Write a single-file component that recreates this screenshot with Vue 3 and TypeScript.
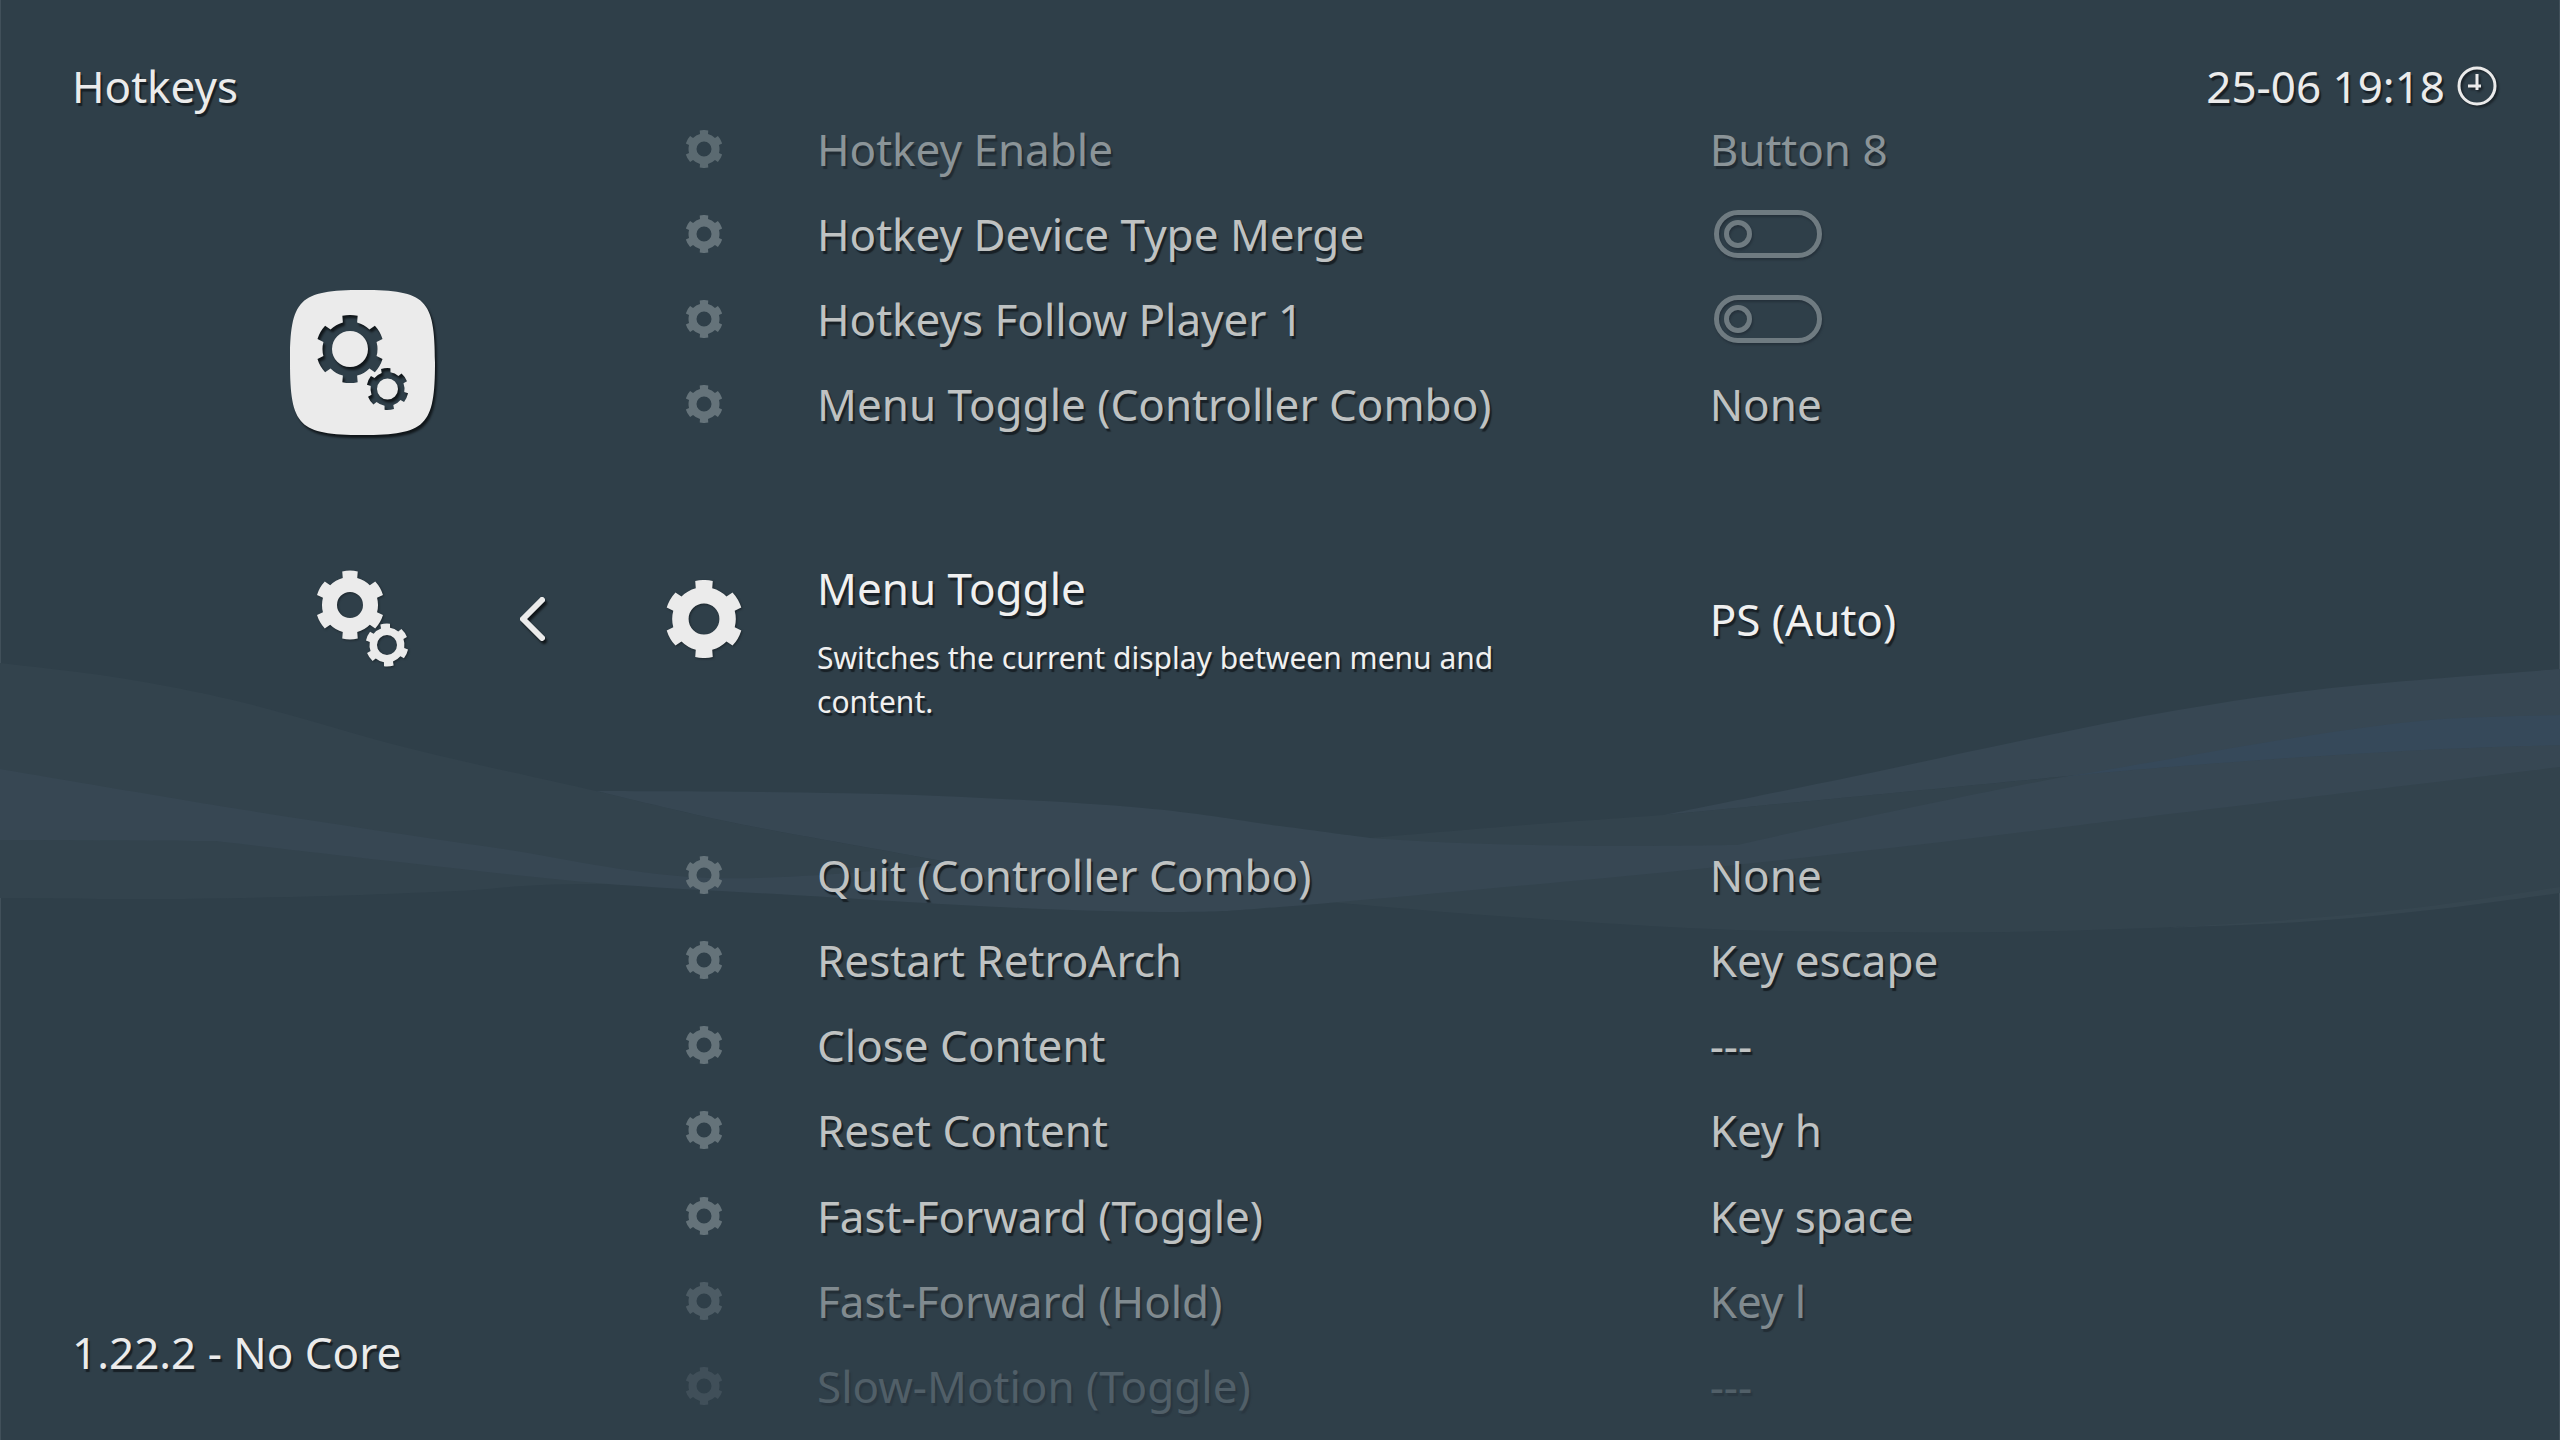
<script setup lang="ts">
type Point = [number, number]

interface Entry {
  label: string
  value?: string
  toggle?: boolean
  fade?: 'soft' | 'dim' | 'faint'
}

const before: Entry[] = [
  { label: 'Hotkey Enable', value: 'Button 8', fade: 'soft' },
  { label: 'Hotkey Device Type Merge', toggle: true },
  { label: 'Hotkeys Follow Player 1', toggle: true },
  { label: 'Menu Toggle (Controller Combo)', value: 'None' },
]

const after: Entry[] = [
  { label: 'Quit (Controller Combo)', value: 'None' },
  { label: 'Restart RetroArch', value: 'Key escape' },
  { label: 'Close Content', value: '---' },
  { label: 'Reset Content', value: 'Key h' },
  { label: 'Fast-Forward (Toggle)', value: 'Key space' },
  { label: 'Fast-Forward (Hold)', value: 'Key l', fade: 'dim' },
  { label: 'Slow-Motion (Toggle)', value: '---', fade: 'faint' },
]

// Six-toothed gear: outer radius, body radius, hole radius, rotation in degrees.
function gear(cx: number, cy: number, outer: number, body: number, hole: number, turn = 0): string {
  const at = (r: number, deg: number) => {
    const a = ((deg + turn - 90) * Math.PI) / 180
    return `${(cx + r * Math.cos(a)).toFixed(2)} ${(cy + r * Math.sin(a)).toFixed(2)}`
  }
  let d = ''
  for (let i = 0; i < 6; i++) {
    const m = i * 60
    d += `${i ? 'L' : 'M'}${at(body, m - 15)}L${at(outer, m - 13)}`
    d += `A${outer} ${outer} 0 0 1 ${at(outer, m + 13)}L${at(body, m + 15)}`
    d += `A${body} ${body} 0 0 1 ${at(body, m + 45)}`
  }
  d += `ZM${cx - hole} ${cy}a${hole} ${hole} 0 1 0 ${hole * 2} 0a${hole} ${hole} 0 1 0 ${-hole * 2} 0Z`
  return d
}

// Smooth curve through a run of points.
function curve(p: Point[]): string {
  let d = `L${p[0][0]} ${p[0][1]}`
  for (let i = 0; i < p.length - 1; i++) {
    const a = p[i - 1] ?? p[i]
    const b = p[i]
    const c = p[i + 1]
    const e = p[i + 2] ?? c
    d += `C${b[0] + (c[0] - a[0]) / 6} ${b[1] + (c[1] - a[1]) / 6} ${c[0] - (e[0] - b[0]) / 6} ${c[1] - (e[1] - b[1]) / 6} ${c[0]} ${c[1]}`
  }
  return d
}

function shape(...runs: Point[][]): string {
  return `M${runs[0][0][0]} ${runs[0][0][1]}` + runs.map(curve).join('') + 'Z'
}

const crest: Point[] = [[0, 663], [120, 678], [245, 703], [408, 748], [596, 791], [735, 823], [898, 853], [960, 864]]
const rim: Point[] = [[1664, 815], [1851, 797], [2047, 778], [2110, 772], [2260, 760], [2423, 750], [2560, 745]]

const haze = [
  shape(crest, [[960, 890], [596, 884], [457, 891], [327, 896], [160, 899], [0, 898]]),
  shape(
    [[1370, 838], [1525, 825], [1664, 815]],
    rim,
    [[2560, 890], [2430, 908], [2300, 921], [2056, 931], [1851, 932], [1688, 928], [1484, 915], [1329, 902]],
  ),
]

const bands = [
  shape(
    [[0, 769], [245, 810], [490, 847], [710, 878], [960, 864]],
    [[960, 864], [898, 853], [735, 823], [596, 791]],
    [[596, 791], [759, 792], [939, 796], [1143, 808], [1280, 826], [1370, 838]],
    [[1370, 838], [1460, 843], [1600, 846], [1737, 845]],
    [[1737, 845], [1851, 820], [2047, 780], [2170, 759], [2300, 737], [2430, 720], [2560, 715]],
    [[2560, 767], [2178, 813], [1933, 843], [1688, 870], [1484, 889], [1280, 907], [1184, 912], [1020, 908], [792, 895], [596, 883], [408, 863], [216, 841]],
    [[216, 841], [0, 840]],
  ),
  shape(
    [[1664, 815], [1851, 777], [2015, 742], [2178, 710], [2341, 687], [2560, 669]],
    [...rim].reverse(),
  ),
]

const overlap = shape(
  [[2060, 778], [2170, 759], [2300, 737], [2430, 720], [2560, 715]],
  [[2560, 745], [2423, 750], [2260, 760], [2110, 772], [2060, 778]],
)

const glint = shape(
  [[2160, 928], [2300, 919], [2430, 906], [2560, 887]],
  [[2560, 893], [2430, 910], [2300, 922], [2160, 928]],
)
</script>

<template>
  <div class="screen">
    <svg class="ribbon" viewBox="0 0 2560 1440" preserveAspectRatio="none" aria-hidden="true">
      <path v-for="(d, i) in haze" :key="'h' + i" :d="d" fill="#33434d" />
      <path v-for="(d, i) in bands" :key="'b' + i" :d="d" fill="#374753" />
      <path :d="overlap" fill="#36495a" />
      <path :d="glint" fill="#364650" />
    </svg>

    <header class="top">
      <h1>Hotkeys</h1>
      <div class="clock">
        <time>25-06 19:18</time>
        <svg class="dial" viewBox="0 0 40 40" aria-hidden="true">
          <circle cx="20" cy="20" r="18" fill="none" stroke="currentColor" stroke-width="3" />
          <path d="M20 8V24M11 20H24" fill="none" stroke="currentColor" stroke-width="3" />
        </svg>
      </div>
    </header>

    <aside class="side">
      <svg class="tile" viewBox="0 0 145 145" aria-hidden="true">
        <path
          fill="currentColor"
          fill-rule="evenodd"
          :d="'M72.5 0C136 0 145 9 145 72.5S136 145 72.5 145S0 136 0 72.5S9 0 72.5 0Z' + gear(60, 59, 34, 27.5, 18) + gear(97.5, 99, 21, 17, 10.5, -5)"
        />
      </svg>
      <div class="category">
        <svg class="gears" viewBox="0 0 145 145" aria-hidden="true">
          <path fill="currentColor" fill-rule="evenodd" :d="gear(60, 59, 34.5, 28, 13)" />
          <path fill="currentColor" fill-rule="evenodd" :d="gear(97, 99, 21.5, 17.5, 10, -5)" />
        </svg>
        <button class="back" type="button" aria-label="Back">
          <svg viewBox="0 0 48 48" aria-hidden="true">
            <path d="M35 5L16 24L35 43" fill="none" stroke="currentColor" stroke-width="6" stroke-linecap="round" stroke-linejoin="round" />
          </svg>
        </button>
      </div>
      <p class="version">1.22.2 - No Core</p>
    </aside>

    <main class="list">
      <ul class="group">
        <li v-for="(row, i) in before" :key="row.label" class="row" :class="row.fade">
          <svg class="icon" viewBox="0 0 76 76" aria-hidden="true">
            <path fill="currentColor" fill-rule="evenodd" :d="gear(38, 38, 38, 31, 15)" />
          </svg>
          <label v-if="row.toggle" class="label" :for="'toggle-' + i">{{ row.label }}</label>
          <span v-else class="label">{{ row.label }}</span>
          <input v-if="row.toggle" :id="'toggle-' + i" class="switch" type="checkbox" />
          <span v-else class="value">{{ row.value }}</span>
        </li>
      </ul>

      <div class="row current">
        <svg class="icon" viewBox="0 0 76 76" aria-hidden="true">
          <path fill="currentColor" fill-rule="evenodd" :d="gear(38, 38, 38, 31, 15)" />
        </svg>
        <div class="label">
          <h2>Menu Toggle</h2>
          <p>Switches the current display between menu and content.</p>
        </div>
        <span class="value">PS (Auto)</span>
      </div>

      <ul class="group rest">
        <li v-for="row in after" :key="row.label" class="row" :class="row.fade">
          <svg class="icon" viewBox="0 0 76 76" aria-hidden="true">
            <path fill="currentColor" fill-rule="evenodd" :d="gear(38, 38, 38, 31, 15)" />
          </svg>
          <span class="label">{{ row.label }}</span>
          <span class="value">{{ row.value }}</span>
        </li>
      </ul>
    </main>
  </div>
</template>

<style>
body {
  margin: 0;
  background: #2f3f49;
}
</style>

<style scoped>
.screen {
  position: relative;
  box-sizing: border-box;
  min-height: 100vh;
  display: grid;
  grid-template-columns: 1fr 3fr;
  grid-template-rows: auto 1fr;
  background: #2f3f49;
  color: #ebebeb;
  font-family: "Noto Sans", "Open Sans", sans-serif;
  font-weight: 400;
  font-size: 44px;
  line-height: 40px;
  text-shadow: 2px 3px 1px #182026;
  box-shadow: inset 1px 0 #41505a, inset -1px 0 #41505a;
}

.ribbon {
  position: absolute;
  inset: 0;
  width: 100%;
  height: 100%;
}

h1, h2, p, ul {
  margin: 0;
  padding: 0;
  font: inherit;
  list-style: none;
}

.top, .side, .list {
  position: relative;
}

.top {
  grid-column: 1 / -1;
  display: flex;
  justify-content: space-between;
  padding: 66px 63px 0 72px;
}

.clock {
  display: flex;
  align-items: center;
  gap: 12px;
}

.dial {
  width: 40px;
  height: 40px;
  filter: drop-shadow(2px 2px 1px #182026);
}

.side {
  display: flex;
  flex-direction: column;
  padding: 184px 0 68px;
}

.tile, .gears {
  width: 145px;
  height: 145px;
}

.tile {
  margin-left: 290px;
  filter: drop-shadow(2px 3px 1px #10161a);
}

.category {
  display: flex;
  align-items: center;
  gap: 72px;
  margin: 111px 0 auto 290px;
}

.gears {
  filter: drop-shadow(1px 1px 1px #1c262c);
}

.back {
  width: 48px;
  height: 48px;
  padding: 0;
  border: 0;
  background: none;
  color: inherit;
  filter: drop-shadow(2px 3px 1px #10161a);
}

.back svg {
  display: block;
}

.version {
  padding-left: 72px;
}

.list {
  display: flex;
  flex-direction: column;
  padding-bottom: 11px;
}

.row {
  display: grid;
  grid-template-columns: 128px 894fr 848fr;
  align-items: center;
  min-height: 85px;
  color: #bfc2c2;
}

.rest {
  flex: 1;
  display: grid;
  grid-auto-rows: 1fr;
}

.icon {
  width: 38px;
  height: 38px;
  justify-self: center;
  color: #65737a;
}

.label {
  padding-left: 49px;
}

.switch {
  appearance: none;
  box-sizing: border-box;
  display: flex;
  align-items: center;
  width: 108px;
  height: 48px;
  margin: 0 0 0 26px;
  padding-left: 5px;
  border: 5px solid #6f7b81;
  border-radius: 24px;
  filter: drop-shadow(1px 2px 1px #24303a);
}

.switch::before {
  content: "";
  box-sizing: border-box;
  width: 28px;
  height: 28px;
  border: 5px solid #6f7b81;
  border-radius: 50%;
}

.value {
  padding-left: 22px;
}

.soft { color: #8b9498; text-shadow: 2px 3px 1px #212c34; }
.soft .icon { color: #5b6a71; }
.dim { color: #808a8f; text-shadow: 2px 3px 1px #232e36; }
.dim .icon { color: #4d5c65; }
.faint { color: #515f68; text-shadow: 2px 3px 1px #2a3741; }
.faint .icon { color: #404f59; }

.current {
  color: #f0f0f0;
  padding: 68px 0 108px;
}

.current .icon {
  width: 78px;
  height: 78px;
  color: #ebebeb;
  filter: drop-shadow(1px 1px 1px #1c262c);
}

.current .label {
  padding-top: 54px;
}

.current p {
  max-width: 720px;
  margin-top: 28px;
  font-size: 30px;
  line-height: 44px;
}
</style>
